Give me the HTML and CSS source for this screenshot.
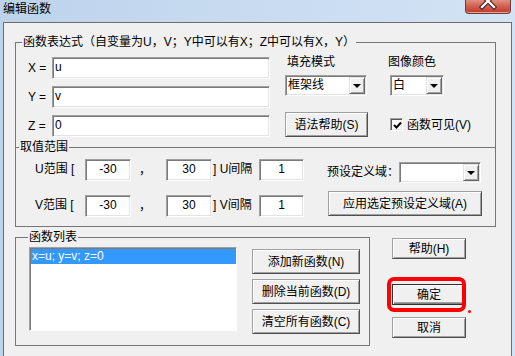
FILE: index.html
```html
<!DOCTYPE html>
<html lang="zh-CN">
<head>
  <meta charset="UTF-8">
  <title>编辑函数</title>
  <link rel="stylesheet" href="styles.css">
</head>
<body>
  <div class="titlebar">
    <span class="title">编辑函数</span>
    <span class="close">
      <svg width="46" height="14" viewBox="0 0 46 14">
        <path d="M17 -5 L29 7 M29 -5 L17 7" stroke="#4a2a26" stroke-width="4.5" stroke-linecap="square"/>
        <path d="M17 -5 L29 7 M29 -5 L17 7" stroke="#fff" stroke-width="2.2" stroke-linecap="square"/>
      </svg>
    </span>
  </div>

  <div class="client">
    <fieldset class="group group-expr">
      <legend>函数表达式（自变量为U，V；Y中可以有X；Z中可以有X，Y）</legend>
      <div class="expr">
        <div class="expr-rows">
          <div class="expr-row"><span class="expr-label">X =</span><div class="field expr-field">u</div></div>
          <div class="expr-row"><span class="expr-label">Y =</span><div class="field expr-field">v</div></div>
          <div class="expr-row"><span class="expr-label">Z =</span><div class="field expr-field">0</div></div>
        </div>
        <div class="opts">
          <span class="opt-label">填充模式</span>
          <span class="opt-label opt-label-color">图像颜色</span>
          <div class="combo combo-fill"><span class="combo-text">框架线</span><span class="drop"></span></div>
          <div class="combo combo-color"><span class="combo-text">白</span><span class="drop"></span></div>
          <button class="btn btn-syntax">语法帮助(S)</button>
          <div class="check-row">
            <span class="check">
              <svg width="9" height="9" viewBox="0 0 9 9"><path d="M1 4 L3.5 6.5 L8 1.5" fill="none" stroke="#000" stroke-width="2"/></svg>
            </span>
            <span>函数可见(V)</span>
          </div>
        </div>
      </div>
    </fieldset>

    <fieldset class="group group-range">
      <legend>取值范围</legend>
      <div class="range">
        <span class="range-label">U范围 [</span>
        <div class="field num">-30</div>
        <span class="range-comma">，</span>
        <div class="field num">30</div>
        <span class="range-label range-step">] U间隔</span>
        <div class="field num">1</div>
        <div class="preset">
          <span class="preset-label">预设定义域：</span>
          <div class="combo combo-preset"><span class="combo-text"></span><span class="drop"></span></div>
        </div>

        <span class="range-label">V范围 [</span>
        <div class="field num">-30</div>
        <span class="range-comma">，</span>
        <div class="field num">30</div>
        <span class="range-label range-step">] V间隔</span>
        <div class="field num">1</div>
        <button class="btn btn-apply">应用选定预设定义域(A)</button>
      </div>
    </fieldset>

    <div class="bottom">
      <fieldset class="group group-list">
        <legend>函数列表</legend>
        <div class="list-body">
          <div class="listbox">
            <div class="list-item selected">x=u; y=v; z=0</div>
          </div>
          <div class="list-buttons">
            <button class="btn btn-list">添加新函数(N)</button>
            <button class="btn btn-list">删除当前函数(D)</button>
            <button class="btn btn-list">清空所有函数(C)</button>
          </div>
        </div>
      </fieldset>

      <div class="side">
        <button class="btn btn-side">帮助(H)</button>
        <div class="ok-wrap">
          <button class="btn btn-side btn-default">确定</button>
          <span class="highlight"></span>
          <span class="highlight-dot"></span>
        </div>
        <button class="btn btn-side btn-cancel">取消</button>
      </div>
    </div>
  </div>
</body>
</html>
```

FILE: styles.css
```css
* {
  margin: 0;
  padding: 0;
  box-sizing: border-box;
}

body {
  width: 515px;
  height: 356px;
  overflow: hidden;
  background: linear-gradient(to right, #bdd3ec, #d3e3f5);
  font: 12px/16px "Liberation Sans", "Noto Sans CJK SC", sans-serif;
  color: #000;
}

.titlebar {
  height: 22px;
  display: flex;
  justify-content: space-between;
  align-items: flex-start;
}

.title {
  padding: 1px 0 0 3px;
  line-height: 16px;
}

.close {
  display: block;
  width: 46px;
  height: 14px;
  margin-right: 4px;
  border: 1px solid #6e3b33;
  border-top: 0;
  border-radius: 0 0 4px 4px;
  background: linear-gradient(#e28e82, #cf5a4a 55%, #b93a2b);
  box-shadow: inset 0 -1px #e7a398;
  overflow: hidden;
}

.close svg {
  display: block;
  margin-left: -1px;
}

.client {
  margin-left: 3px;
  width: 509px;
  height: 334px;
  background: #f0f0f0;
  border: 1px solid #6d6d6d;
  border-bottom: 0;
  padding-left: 11px;
}

/* group boxes */
.group {
  border: 1px solid #767676;
  padding: 0;
  margin: 0;
  min-width: 0;
}

.group legend {
  line-height: 15px;
  padding: 0 1px;
  background: #f0f0f0;
}

.group-expr {
  width: 481px;
  margin-top: 12px;
  border-bottom: 0;
}

.group-expr legend {
  margin-left: 6px;
}

.group-range {
  width: 481px;
  margin-top: -7px;
}

.group-range legend {
  margin-left: 3px;
}

.group-list {
  margin-top: 3px;
}

.group-list legend {
  margin-left: 12px;
}

/* text fields */
.field {
  height: 22px;
  background: #fff;
  border: 1px solid;
  border-color: #a0a0a0 #fff #fff #a0a0a0;
  box-shadow: inset 1px 1px #7a7a7a, inset -1px -1px #e3e3e3;
  padding: 1px 2px 0 2px;
  line-height: 16px;
  white-space: nowrap;
}

.num {
  text-align: center;
}

/* expression group */
.expr {
  display: flex;
  align-items: flex-start;
  padding: 0 0 10px 12px;
}

.expr-rows {
  display: flex;
  flex-direction: column;
  gap: 7px;
  padding-top: 7px;
}

.expr-row {
  display: flex;
  align-items: center;
}

.expr-label {
  width: 24px;
}

.expr-field {
  width: 218px;
}

.opts {
  display: grid;
  grid-template-columns: 103px 100px;
  align-items: start;
  margin-left: 15px;
  padding-top: 4px;
}

.opt-label {
  padding-left: 2px;
}

.opt-label-color {
  padding-left: 0;
}

.combo {
  display: flex;
  height: 21px;
  background: #fff;
  border: 1px solid;
  border-color: #a0a0a0 #fff #fff #a0a0a0;
  box-shadow: inset 1px 1px #7a7a7a, inset -1px -1px #e3e3e3;
}

.combo-text {
  flex: 1;
  padding: 1px 0 0 2px;
  line-height: 16px;
}

.drop {
  position: relative;
  width: 16px;
  margin: 1px 1px 1px 0;
  background: #f0f0f0;
  border: 1px solid;
  border-color: #e3e3e3 #696969 #696969 #e3e3e3;
  box-shadow: inset 1px 1px #fff, inset -1px -1px #a0a0a0;
}

.drop::after {
  content: "";
  position: absolute;
  left: 3px;
  top: 6px;
  border-left: 4px solid transparent;
  border-right: 4px solid transparent;
  border-top: 4px solid #000;
}

.combo-fill {
  width: 82px;
  margin-top: 5px;
}

.combo-color {
  width: 54px;
  margin: 5px 0 0 2px;
}

.btn {
  display: block;
  font: inherit;
  color: #000;
  background: #f0f0f0;
  border: 1px solid;
  border-color: #a0a0a0 #505050 #505050 #a0a0a0;
  box-shadow: inset 1px 1px #fff, inset -1px -1px #a0a0a0;
  line-height: 16px;
  text-align: center;
  cursor: pointer;
}

.btn-syntax {
  width: 83px;
  height: 25px;
  margin-top: 16px;
}

.check-row {
  display: flex;
  align-items: center;
  gap: 4px;
  margin-top: 16px;
  height: 25px;
  padding-left: 2px;
}

.check {
  display: flex;
  align-items: center;
  justify-content: center;
  width: 13px;
  height: 13px;
  background: #fff;
  border: 1px solid;
  border-color: #a0a0a0 #fff #fff #a0a0a0;
  box-shadow: inset 1px 1px #555, inset -1px -1px #e3e3e3;
}

.check svg {
  display: block;
  margin: 1px 0 0 1px;
}

/* range group */
.range {
  display: grid;
  grid-template-columns: 50px 46px 35px 46px 47px 45px 23px 155px;
  grid-template-rows: 22px 22px;
  row-gap: 14px;
  padding: 4px 0 9px 19px;
}

.range-label {
  padding-top: 2px;
  white-space: nowrap;
}

.range-step {
  padding-left: 1px;
}

.range-comma {
  padding: 3px 0 0 8px;
}

.preset {
  grid-column: 8;
  display: flex;
  align-items: center;
  margin-top: 4px;
}

.preset-label {
  width: 72px;
}

.combo-preset {
  width: 82px;
}

.btn-apply {
  grid-column: 8;
  width: 154px;
  height: 25px;
  margin: -4px 0 0 1px;
}

/* bottom */
.bottom {
  display: flex;
  align-items: flex-start;
}

.list-body {
  display: flex;
  align-items: flex-start;
  padding: 2px 9px 11px 13px;
}

.listbox {
  width: 208px;
  height: 84px;
  background: #fff;
  border: 1px solid;
  border-color: #a0a0a0 #fff #fff #a0a0a0;
  box-shadow: inset 1px 1px #7a7a7a;
  padding: 1px 0 0 1px;
}

.list-item {
  height: 15px;
  line-height: 15px;
  padding-left: 1px;
  white-space: nowrap;
}

.list-item.selected {
  background: #3399ff;
  color: #fff;
}

.list-buttons {
  display: flex;
  flex-direction: column;
  gap: 5px;
  margin: 2px 0 0 15px;
}

.btn-list {
  width: 108px;
  height: 25px;
}

.side {
  display: flex;
  flex-direction: column;
  margin: 11px 0 0 22px;
}

.btn-side {
  width: 74px;
  height: 21px;
}

.ok-wrap {
  position: relative;
  margin-top: 25px;
}

.btn-default {
  border-color: #303030;
  box-shadow: inset 1px 1px #fff, inset -1px -1px #808080, inset -2px -2px #a0a0a0;
}

.highlight {
  position: absolute;
  left: -5px;
  top: -7px;
  width: 79px;
  height: 35px;
  border: 4px solid #ff0000;
  border-radius: 7px;
}

.highlight-dot {
  position: absolute;
  left: 76px;
  top: 26px;
  width: 3px;
  height: 3px;
  background: #ff0000;
  border-radius: 50%;
}

.btn-cancel {
  margin-top: 12px;
}
```
